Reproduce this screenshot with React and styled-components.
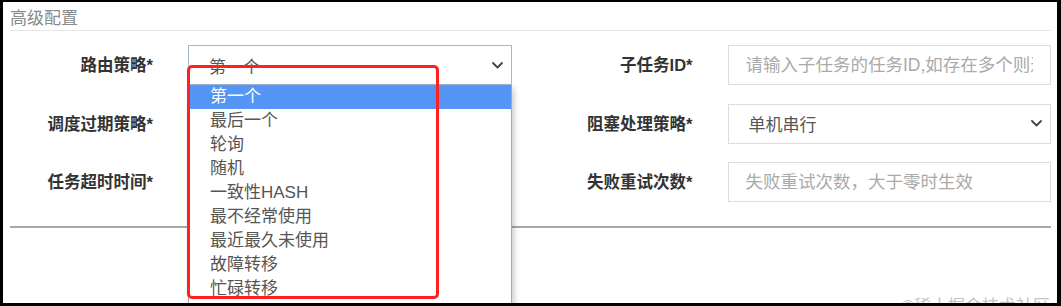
import styled, { createGlobalStyle } from "styled-components";

const GlobalStyle = createGlobalStyle`
  html, body {
    margin: 0;
    padding: 0;
    background: #fff;
  }
  body {
    font-family: "Liberation Sans", "Noto Sans CJK SC", sans-serif;
  }
`;

const Frame = styled.div`
  position: relative;
  width: 1061px;
  height: 306px;
  box-sizing: border-box;
  border-style: solid;
  border-color: #000;
  border-width: 2px 4px 3px 3px;
  padding: 0 6px 0 7px;
  overflow: hidden;
  background: #fff;
`;

const SectionTitle = styled.div`
  padding-top: 6px;
  line-height: 22px;
  font-size: 17px;
  color: #8a8a8a;
  border-bottom: 1px solid #e6e6e6;
`;

const Form = styled.div`
  display: flex;
  flex-direction: column;
  gap: 18.5px;
  margin-top: 14px;
`;

const Row = styled.div`
  display: grid;
  grid-template-columns: 1fr 1fr;
  column-gap: 38px;
`;

const Field = styled.div`
  display: grid;
  grid-template-columns: 143px 1fr;
  column-gap: 35px;
  align-items: center;
`;

const Label = styled.label`
  text-align: right;
  font-size: 16.5px;
  font-weight: 700;
  color: #333;
  line-height: 20px;
  white-space: nowrap;
`;

const SelectWrap = styled.div`
  position: relative;
  z-index: ${(p) => (p.$open ? 5 : 1)};
`;

const SelectBox = styled.div`
  display: flex;
  align-items: center;
  height: 40px;
  box-sizing: border-box;
  padding: 0 8px 0 20px;
  border: 1px solid ${(p) => (p.$focused ? "#a3b8d2" : "#dcdcdc")};
  background: #fff;
  font-size: 17px;
  color: #555;
`;

const SelectValue = styled.span`
  flex: 1;
  white-space: nowrap;
  overflow: hidden;
`;

const Input = styled.input`
  display: block;
  width: 100%;
  height: 40px;
  box-sizing: border-box;
  padding: 0 17px;
  border: 1px solid #dcdcdc;
  outline: none;
  background: #fff;
  font-family: "Liberation Sans", "Noto Sans CJK SC", sans-serif;
  font-size: 17.5px;
  color: #555;

  &::placeholder {
    color: #aaa;
  }
`;

const OptionList = styled.ul`
  position: absolute;
  top: 40px;
  left: 0;
  right: 0;
  margin: 0;
  padding: 0 0 12px;
  list-style: none;
  background: #fff;
  border: 1px solid #a8a8a8;
  border-top: none;
  box-shadow: 2px 3px 6px rgba(0, 0, 0, 0.22);
  z-index: 10;
`;

const Option = styled.li`
  height: 24px;
  line-height: 24px;
  padding-left: 21px;
  font-size: 17px;
  color: ${(p) => (p.$active ? "#fff" : "#555")};
  background: ${(p) => (p.$active ? "#5595f6" : "transparent")};
  white-space: nowrap;
`;

const Highlight = styled.div`
  position: absolute;
  left: -1px;
  top: 20px;
  width: 252px;
  height: 234px;
  box-sizing: border-box;
  border: 3px solid #ff2020;
  border-radius: 5px;
  z-index: 20;
  pointer-events: none;
`;

const Divider = styled.div`
  margin-top: 24px;
  height: 2px;
  background: #a9a9a9;
`;

const Watermark = styled.div`
  position: absolute;
  right: 7px;
  top: 295px;
  font-size: 17px;
  line-height: 20px;
  color: #c4c4c4;
  white-space: nowrap;
  z-index: 30;
`;

const Chevron = () => (
  <svg width="11" height="7" viewBox="0 0 11 7">
    <polyline
      points="1,1 5.5,5.5 10,1"
      fill="none"
      stroke="#444"
      strokeWidth="1.8"
      strokeLinecap="round"
      strokeLinejoin="round"
    />
  </svg>
);

const routeOptions = [
  "第一个",
  "最后一个",
  "轮询",
  "随机",
  "一致性HASH",
  "最不经常使用",
  "最近最久未使用",
  "故障转移",
  "忙碌转移",
];

const Select = ({ value, open, focused, options = [] }) => (
  <SelectWrap $open={open}>
    <SelectBox $focused={focused}>
      <SelectValue>{value}</SelectValue>
      <Chevron />
    </SelectBox>
    {open && (
      <>
        <OptionList>
          {options.map((o) => (
            <Option key={o} $active={o === value}>
              {o}
            </Option>
          ))}
        </OptionList>
        <Highlight />
      </>
    )}
  </SelectWrap>
);

export default function App() {
  return (
    <>
      <GlobalStyle />
      <Frame>
        <SectionTitle>高级配置</SectionTitle>
        <Form>
          <Row>
            <Field>
              <Label>路由策略*</Label>
              <Select value="第一个" open focused options={routeOptions} />
            </Field>
            <Field>
              <Label>子任务ID*</Label>
              <Input placeholder="请输入子任务的任务ID,如存在多个则逗号分隔" />
            </Field>
          </Row>
          <Row>
            <Field>
              <Label>调度过期策略*</Label>
              <Select value="" />
            </Field>
            <Field>
              <Label>阻塞处理策略*</Label>
              <Select value="单机串行" />
            </Field>
          </Row>
          <Row>
            <Field>
              <Label>任务超时时间*</Label>
              <Input />
            </Field>
            <Field>
              <Label>失败重试次数*</Label>
              <Input placeholder="失败重试次数，大于零时生效" />
            </Field>
          </Row>
        </Form>
        <Divider />
        <Watermark>©稀土掘金技术社区</Watermark>
      </Frame>
    </>
  );
}
